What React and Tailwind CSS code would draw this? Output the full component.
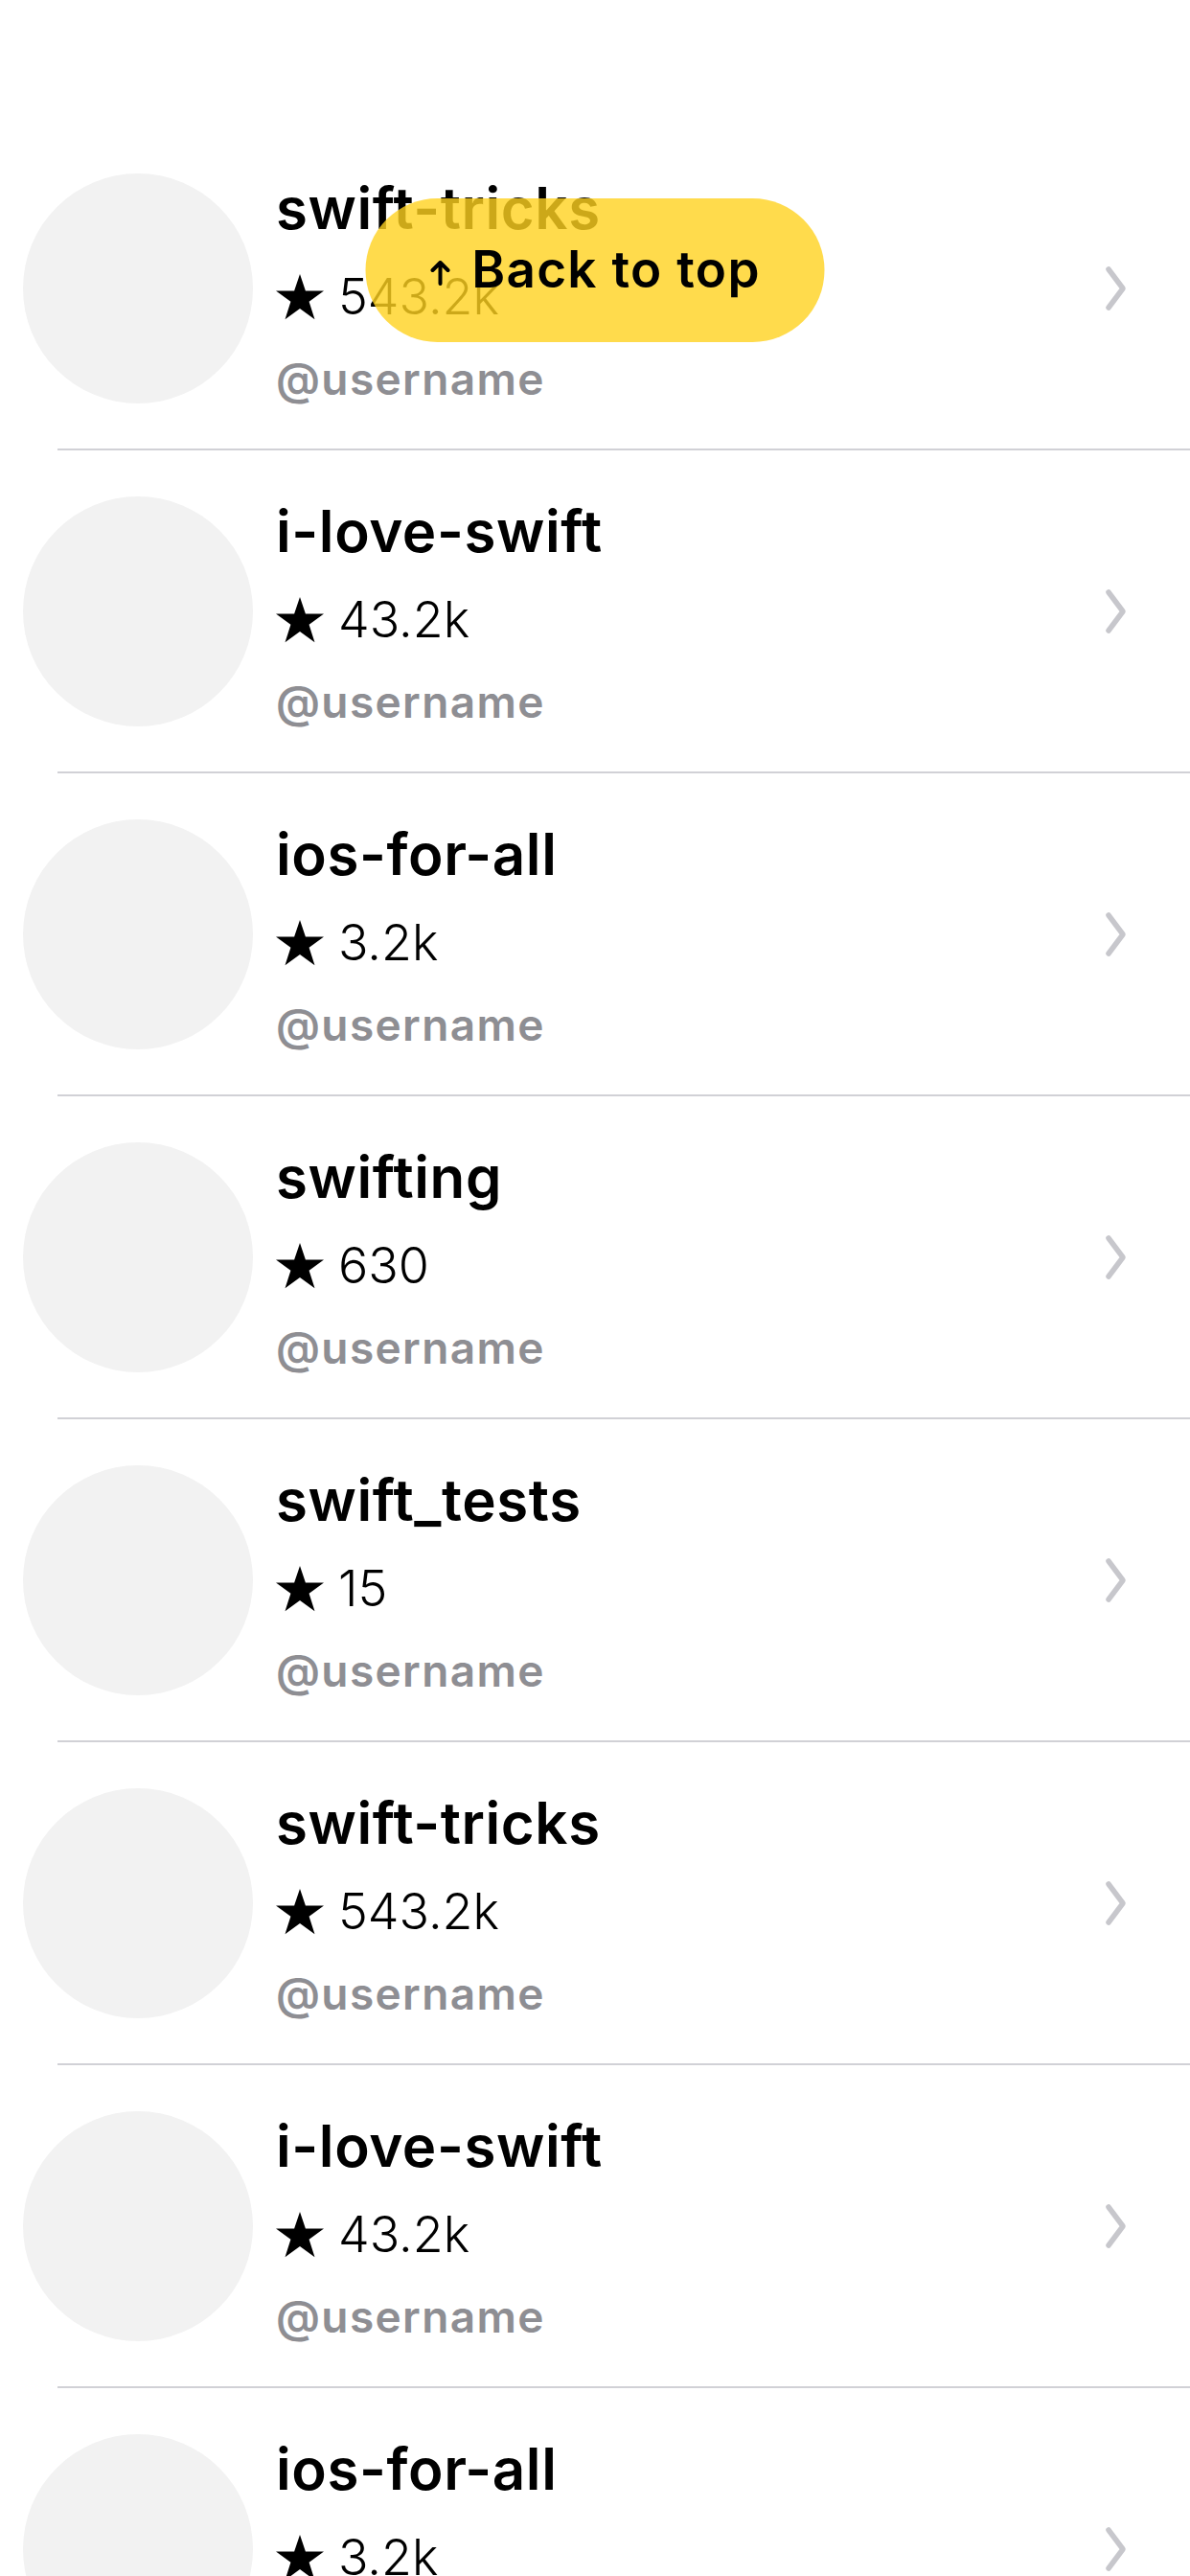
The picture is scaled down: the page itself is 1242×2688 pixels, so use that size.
import React from "react";

// ── Data ────────────────────────────────────────────────────────────────
const repos = [
  { name: "swift-tricks", stars: "543.2k" },
  { name: "i-love-swift", stars: "43.2k" },
  { name: "ios-for-all", stars: "3.2k" },
  { name: "swifting", stars: "630" },
  { name: "swift_tests", stars: "15" },
  { name: "swift-tricks", stars: "543.2k" },
  { name: "i-love-swift", stars: "43.2k" },
  { name: "ios-for-all", stars: "3.2k" },
];

const Star = () => (
  <svg width="50" height="48" viewBox="0 0 24 23" className="shrink-0">
    <path d="M12 0l2.83 8.4H24l-7.4 5.4 2.83 8.9L12 17.3l-7.43 5.4 2.83-8.9L0 8.4h9.17z" fill="#000" />
  </svg>
);

const Chevron = () => (
  <svg width="24" height="48" viewBox="0 0 24 48" fill="none" className="shrink-0">
    <path d="M5 4l15 20L5 44" stroke="#c7c7cc" strokeWidth="5.5" strokeLinecap="round" strokeLinejoin="round" />
  </svg>
);

// ── Row ────────────────────────────────────────────────────────────────
function RepoRow({ name, stars }) {
  return (
    <div>
      <div className="h-[335px] flex items-center pl-[24px] pr-[66px]">
        <div className="w-[240px] h-[240px] rounded-full bg-[#f2f2f2] shrink-0" />
        <div className="flex-1 flex flex-col pl-[24px] pt-[6px]">
          <p className="text-[60px] leading-[80px] font-semibold text-black tracking-[0.01em]">{name}</p>
          <div className="flex items-center gap-[15px] mt-[13px] h-[80px]">
            <Star />
            <span className="text-[52px] font-light text-black">{stars}</span>
          </div>
          <p className="text-[46px] leading-[70px] mt-[10px] font-semibold text-[#8e8e93] tracking-[0.03em]">@username</p>
        </div>
        <Chevron />
      </div>
      <div className="ml-[60px] h-[2px] bg-[#d1d1d6]" />
    </div>
  );
}

export default function App() {
  return (
    <div className="relative w-[1242px] h-[2688px] overflow-hidden bg-white font-['Inter',sans-serif]">
      <div className="pt-[133px]">
        {repos.map((r, i) => (
          <RepoRow key={i} name={r.name} stars={r.stars} />
        ))}
      </div>

      {/* floating back-to-top pill */}
      <button className="absolute top-[207px] left-1/2 -translate-x-1/2 w-[479px] h-[150px] rounded-full bg-[#ffd21f]/80 flex items-center justify-center gap-[22px]">
        <svg width="22" height="26" viewBox="0 0 22 26" fill="none" className="mt-[6px]">
          <path d="M11 24V3M3 10l8-8 8 8" stroke="#000" strokeWidth="4" strokeLinecap="round" strokeLinejoin="round" />
        </svg>
        <span className="text-[53px] font-semibold text-black tracking-[0.025em]">Back to top</span>
      </button>
    </div>
  );
}
